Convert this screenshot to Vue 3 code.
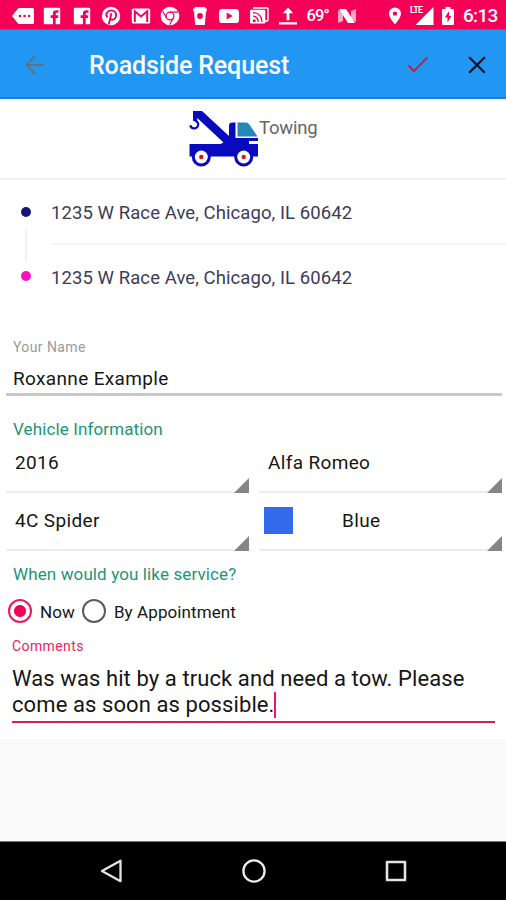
<script setup>
import { ref } from 'vue'

const addresses = [
  { text: '1235 W Race Ave, Chicago, IL 60642', kind: 'from' },
  { text: '1235 W Race Ave, Chicago, IL 60642', kind: 'to' },
]
const service = ref('now')
</script>

<template>
  <div class="screen">
    <div class="status">
      <div class="slot"><svg width="24" height="18" viewBox="0 0 24 18"><path d="M1 9 7 1.5Q7.400 1 8 1H21.500Q23 1 23 2.500V15.500Q23 17 21.500 17H8Q7.400 17 7 16.500Z" fill="#fff" /><g fill="#f50057"><circle cx="9" cy="9" r="1.300" /><circle cx="13.500" cy="9" r="1.300" /><circle cx="18" cy="9" r="1.300" /></g></svg></div>
      <div v-for="n in 2" :key="n" class="slot"><svg width="18" height="18" viewBox="0 0 18 18"><path d="M2 .8H16Q17.200.8 17.200 2V16Q17.200 17.200 16 17.200H12.700V11H15L15.400 8.300H12.700V6.900Q12.700 5.700 14 5.700H15.500V3.200H13.200Q9.900 3.200 9.900 6.500V8.300H7.600V11H9.900V17.200H2Q.8 17.200.8 16V2Q.8.800 2 .8Z" fill="#fff" /></svg></div>
      <div class="slot"><svg width="20" height="20" viewBox="0 0 20 20"><circle cx="10" cy="10" r="9.200" fill="#fff" /><path d="M6.500 11.300C3.600 8.300 6.500 4.400 10.300 4.400c3 0 4.800 2 4.800 4.400 0 2.800-1.800 4.900-3.900 4.900-1.200 0-1.900-.6-2-1.300M10.400 7.300 7.800 18.500" fill="none" stroke="#f50057" stroke-width="1.900" /></svg></div>
      <div class="slot"><svg width="20" height="18" viewBox="0 0 20 18"><rect x=".8" y="1.600" width="18.400" height="15" rx="1.500" fill="#fff" /><path d="M3.800 15V4.300L10 9.400l6.200-5.100V15" fill="none" stroke="#f50057" stroke-width="2" /></svg></div>
      <div class="slot"><svg width="20" height="20" viewBox="0 0 20 20"><circle cx="10" cy="10" r="9.300" fill="#fff" /><g fill="none" stroke="#f50057" stroke-width="1.200"><circle cx="10" cy="10" r="3.900" /><path d="M10 6.100H18M6.600 12 2.700 5.300M13.400 12 9.600 18.700" /></g></svg></div>
      <div class="slot"><svg width="16" height="20" viewBox="0 0 16 20"><path d="M3 1H13L13.500 2.500H14.800V5.500H14L12.800 19H3.200L2 5.500H1.200V2.500H2.500Z" fill="#fff" /><circle cx="8" cy="10" r="2.900" fill="#f50057" /></svg></div>
      <div class="slot"><svg width="22" height="16" viewBox="0 0 22 16"><rect x="1" y=".9" width="20" height="14.200" rx="3.400" fill="#fff" /><path d="m8.700 4.600 6 3.400-6 3.400Z" fill="#f50057" /></svg></div>
      <div class="slot"><svg width="20" height="18" viewBox="0 0 20 18"><path d="M4 1H18Q19 1 19 2V13Q19 14 18 14H16" fill="none" stroke="#fff" stroke-width="1.500" /><rect x="1" y="2.800" width="15.300" height="13.700" rx="1.300" fill="#fff" /><g fill="none" stroke="#f50057" stroke-width="1.300"><path d="M4 5.600Q12.500 6 13 15M4 9.100Q9 9.500 9.300 15" /></g><circle cx="5.200" cy="13.700" r="1.500" fill="#f50057" /></svg></div>
      <div class="slot"><svg width="20" height="20" viewBox="0 0 20 20"><path d="M10 1.500 15.200 7.300H11.400V14.200H8.600V7.300H4.800ZM1 16.300H19V18.500H1Z" fill="#fff" /></svg></div>
      <div class="slot temp">69°</div>
      <div class="slot"><svg width="20" height="18" viewBox="0 0 20 18"><path d="M1 3 6 6V14L1 16ZM14 4 19 2V15L14 12Z" fill="#fff" opacity=".65" /><path d="M2 2H9L18 16H11Z" fill="#fff" /></svg></div>
      <div class="system">
        <svg width="14" height="20" viewBox="0 0 14 20"><path fill-rule="evenodd" d="M7 1.600a6 6 0 0 0-6 6C1 12 7 18.500 7 18.500s6-6.500 6-10.900a6 6 0 0 0-6-6Zm0 3.800a2.200 2.200 0 1 1 0 4.400 2.200 2.200 0 0 1 0-4.400Z" fill="#fff" /></svg>
        <div class="signal"><svg width="24" height="20" viewBox="0 0 24 20"><path d="M23.500 1V19H5.500Z" fill="#fff" /></svg><span>LTE</span></div>
        <svg class="battery" width="14" height="20" viewBox="0 0 14 20"><path d="M4.500 1H9.500V3H12Q13 3 13 4V18Q13 19 12 19H2Q1 19 1 18V4Q1 3 2 3H4.500Z" fill="#fff" /><path d="M8 5 3.900 11.500H6.500V16.500L10.300 9.900H8Z" fill="#f50057" /></svg>
        <span class="clock">6:13</span>
      </div>
    </div>

    <header class="bar">
      <svg class="back" width="20" height="20" viewBox="0 0 20 20"><path d="M19 10H1.800M10 1.300 1.300 10 10 18.700" fill="none" stroke="#62717e" stroke-width="2" /></svg>
      <h1>Roadside Request</h1>
      <svg class="check" width="22" height="18" viewBox="0 0 22 18"><path d="m1.500 9.500 5.500 5.600L20.300 1.500" fill="none" stroke="#c51f40" stroke-width="2" /></svg>
      <svg width="18" height="18" viewBox="0 0 18 18"><path d="m1.200 1.200 15.600 15.600M16.800 1.200 1.200 16.800" stroke="#07131d" stroke-width="2.200" /></svg>
    </header>

    <main>
      <section class="service">
        <svg width="70" height="57" viewBox="0 0 70 57">
          <path d="M4 1H13L40 26V15.500Q40 12.500 43.500 12.500H46.500V28H69V31H60V34H69V46.500H.5V34H31.500L34.500 32.500 8.300 8V11H4Z" fill="#0909bd" />
          <path d="M5.800 10.500C9.500 12 10 14.500 8.500 16.700 6.500 19.500 2 18.800 1.300 15.300" fill="none" stroke="#0909bd" stroke-width="2.200" />
          <path d="M48.500 12.500H57Q59 12.500 60 14L68.500 26.500H48.500Z" fill="#2388b4" />
          <g v-for="x in [12.3, 54.7]" :key="x"><circle :cx="x" cy="47" r="9.500" fill="#0909bd" /><circle :cx="x" cy="47" r="6.500" fill="#fff" /><circle :cx="x" cy="47" r="2.200" fill="#d31720" /></g>
        </svg>
        <span>Towing</span>
      </section>

      <section class="route">
        <div v-for="a in addresses" :key="a.kind" class="stop" :class="a.kind">
          <i></i><div class="address">{{ a.text }}</div>
        </div>
        <div class="link"></div>
      </section>

      <section class="name">
        <label>Your Name</label>
        <div class="value">Roxanne Example</div>
      </section>

      <h2 class="vehicle-title">Vehicle Information</h2>
      <section class="vehicle">
        <div class="select">2016</div>
        <div class="select">Alfa Romeo</div>
        <div class="select">4C Spider</div>
        <div class="select color"><b></b>Blue</div>
      </section>

      <h2 class="when">When would you like service?</h2>
      <section class="radios">
        <div class="option" @click="service = 'now'"><i :class="{ on: service === 'now' }"></i><span>Now</span></div>
        <div class="option" @click="service = 'later'"><i :class="{ on: service === 'later' }"></i><span>By Appointment</span></div>
      </section>

      <section class="comments">
        <label>Comments</label>
        <div class="text"><div>Was was hit by a truck and need a tow. Please</div><div class="last">come as soon as possible.<i class="caret"></i></div></div>
      </section>
    </main>

    <nav>
      <svg width="24" height="26" viewBox="0 0 24 26"><path d="M21.500 2.800V23.200L3 13Z" fill="none" stroke="#e4e4e4" stroke-width="2.300" stroke-linejoin="round" /></svg>
      <svg width="26" height="26" viewBox="0 0 26 26"><circle cx="13" cy="13" r="10.600" fill="none" stroke="#eee" stroke-width="2.300" /></svg>
      <svg width="24" height="24" viewBox="0 0 24 24"><rect x="3" y="3" width="18" height="18" fill="none" stroke="#e4e4e4" stroke-width="2.600" stroke-linejoin="round" /></svg>
    </nav>
  </div>
</template>

<style>
body { background: #fafafa; }
</style>

<style scoped>
* { box-sizing: border-box; }
svg { display: block; flex: none; }
.screen { width: 506px; height: 900px; display: flex; flex-direction: column; overflow: hidden; font-family: Roboto, sans-serif; color: #161616; background: #fafafa; }
.status { height: 30px; flex: none; display: flex; align-items: center; padding: 2px 0 0 8px; background: #f50057; color: #fff; border-bottom: 1px solid #b83c83; }
.slot { width: 29.5px; flex: none; display: flex; justify-content: center; }
.temp { font-size: 16.5px; font-weight: 500; letter-spacing: -.9px; }
.system { flex: 1; display: flex; align-items: center; padding-left: 26px; }
.signal { position: relative; margin-left: 8px; }
.signal span { position: absolute; left: 0; top: 0; font-size: 9px; line-height: 9px; font-weight: 700; letter-spacing: -.7px; }
.battery { margin-left: 7px; }
.clock { margin-left: 8px; font-size: 19px; line-height: 20px; font-weight: 500; letter-spacing: -.7px; }
.bar { height: 69px; flex: none; display: flex; align-items: center; padding: 2px 20px 0 25px; background: #2196f3; border-bottom: 2px solid #1480e0; }
.bar h1 { margin: 2px 0 0 44px; flex: 1; color: #fff; font-size: 25px; font-weight: 500; line-height: 30px; letter-spacing: -.13px; }
.check { margin-right: 39px; }
main { height: 640px; flex: none; background: #fff; }
.service { height: 81px; display: flex; padding: 11px 0 0 189px; border-bottom: 2px solid #f2f2f2; font-size: 18.500px; line-height: 22px; letter-spacing: -.2px; color: #666; }
.service span { padding-top: 7px; }
.route { position: relative; height: 147px; }
.stop { display: flex; align-items: center; height: 65px; padding-left: 21px; color: #3c3c58; font-size: 18.500px; letter-spacing: .08px; }
.stop i { width: 10px; height: 10px; border-radius: 50%; background: #1a137c; margin: 0 20px 1px 0; }
.stop.to i { background: #f90fc0; margin-bottom: 3px; }
.address { flex: 1; height: 65px; line-height: 66px; }
.from .address { border-bottom: 2px solid #f5f5f5; }
.link { position: absolute; left: 25px; top: 48px; width: 2px; height: 34px; background: #f3f3f3; }
.name { margin: 0 4px 0 6px; height: 69px; padding: 11px 0 0 7px; border-bottom: 3px solid #c8c8c8; }
.name label { display: block; font-size: 14px; line-height: 18px; letter-spacing: .4px; color: #9b9b9b; }
.value { font-size: 19px; line-height: 24px; letter-spacing: .35px; margin-top: 11px; }
h2 { margin: 0; padding-left: 13px; font-weight: 400; color: #1c9479; font-size: 17px; line-height: 22px; letter-spacing: .12px; }
.vehicle-title { padding-top: 22px; height: 45px; }
.vehicle { display: grid; grid-template-columns: 243px 243px; grid-auto-rows: 58px; column-gap: 10px; padding-left: 6px; margin-top: -6px; }
.select { position: relative; display: flex; align-items: center; padding: 0 0 0 9px; border-bottom: 2px solid #ececec; font-size: 19px; line-height: 24px; letter-spacing: .35px; }
.select::after { content: ''; position: absolute; right: 0; bottom: -2px; border-left: 15px solid transparent; border-bottom: 15px solid #858585; }
.select.color { padding-left: 5px; }
.color b { width: 29px; height: 27px; margin: 0 49px 2px 0; background: #316bea; }
.when { padding-top: 12px; }
.radios { display: flex; padding: 13px 0 0 8px; }
.option { display: flex; align-items: center; height: 26px; font-size: 17px; letter-spacing: .1px; }
.option i { width: 24px; height: 24px; border: 2px solid #5b5b5b; border-radius: 50%; margin-right: 8px; }
.option span { padding-top: 1px; }
.option + .option { margin-left: 7px; }
.option i.on { border-color: #e9195a; background: radial-gradient(circle, #f50057 0 5.500px, transparent 6.500px); }
.comments { margin: 11px 11px 0 12px; border-bottom: 2px solid #dc1d4b; height: 88px; }
.comments label { display: block; font-size: 14px; line-height: 18px; letter-spacing: .4px; color: #ee2265; padding-top: 2px; }
.text { font-size: 22px; line-height: 26px; letter-spacing: .09px; margin-top: 11px; white-space: nowrap; }
.last { display: flex; }
.caret { width: 2px; height: 26px; background: #e9195a; }
nav { margin-top: auto; height: 59px; flex: none; background: #000; border-top: 1px solid #777; display: flex; align-items: center; padding: 0 98px 0 99px; justify-content: space-between; }
</style>
